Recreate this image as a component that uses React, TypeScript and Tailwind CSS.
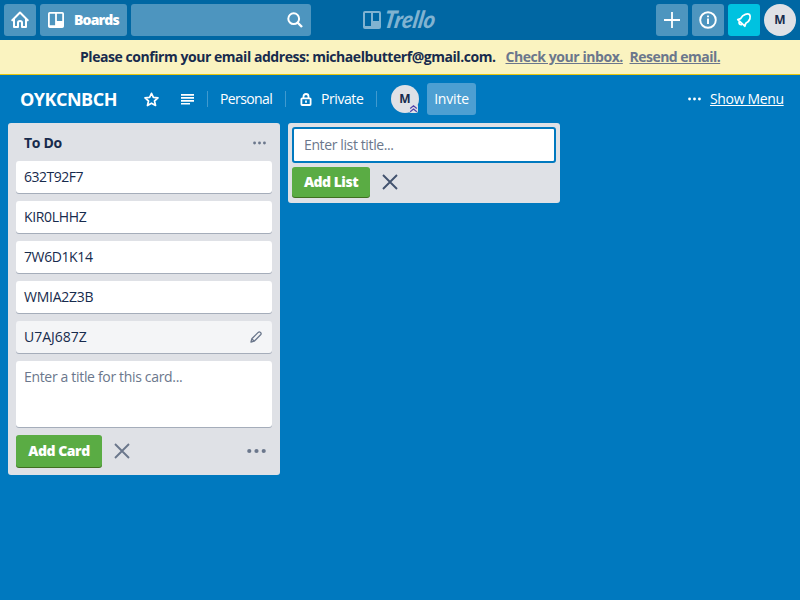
import type { ReactNode } from "react";

const cards = [
  { title: "632T92F7", tracking: "tracking-[-0.48px]" },
  { title: "KIR0LHHZ", tracking: "tracking-[-0.35px]" },
  { title: "7W6D1K14", tracking: "tracking-[-0.4px]" },
  { title: "WMIA2Z3B", tracking: "tracking-[-0.25px]" },
  { title: "U7AJ687Z", tracking: "tracking-[-0.02px]" },
];

function HeaderButton({ children, className = "" }: { children: ReactNode; className?: string }) {
  return (
    <button className={`flex h-8 shrink-0 items-center rounded-[3px] text-white ${className}`}>{children}</button>
  );
}

function BoardIcon({ className = "" }: { className?: string }) {
  return (
    <svg className={className} viewBox="0 0 18 18" fill="currentColor">
      <path
        fillRule="evenodd"
        d="M2 0H16Q18 0 18 2V16Q18 18 16 18H2Q0 18 0 16V2Q0 0 2 0ZM2 2V15H8V2ZM10 2V10H16V2Z"
      />
    </svg>
  );
}

function Dots({ size, className = "" }: { size: number; className?: string }) {
  return (
    <svg width={size} height={6} viewBox={`0 0 ${size} 6`} fill="currentColor" className={className}>
      <circle cx={size * 0.12} cy="3" r={size * 0.11} />
      <circle cx={size * 0.5} cy="3" r={size * 0.11} />
      <circle cx={size * 0.88} cy="3" r={size * 0.11} />
    </svg>
  );
}

function CloseIcon({ className = "" }: { className?: string }) {
  return (
    <svg width="16" height="16" viewBox="0 0 16 16" fill="none" stroke="currentColor" strokeWidth="1.9" className={className}>
      <path d="M1 1L15 15M15 1L1 15" />
    </svg>
  );
}

function TopBar() {
  return (
    <header className="flex h-10 items-center bg-[#0067a3] pr-1 pl-1">
      <HeaderButton className="w-8 justify-center bg-[#4d95bf]">
        <svg width="18" height="18" viewBox="0 0 18 18" fill="none" stroke="currentColor" strokeWidth="2" strokeLinejoin="round" strokeLinecap="round">
          <path d="M1.3 9.2L9 1.5L16.7 9.2M3 8V16H7V11.5Q7 10 9 10T11 11.5V16H15V8" />
        </svg>
      </HeaderButton>
      <HeaderButton className="ml-1 w-[87px] bg-[#4d95bf] pl-2">
        <BoardIcon className="size-4" />
        <span className="ml-[10px] text-[14px] leading-5 font-extrabold tracking-[-0.85px]">Boards</span>
      </HeaderButton>
      <div className="ml-1 flex h-8 w-[180px] items-center justify-end rounded-[3px] bg-[#4d95bf] pr-2 text-white">
        <svg width="16" height="16" viewBox="0 0 16 16" fill="none" stroke="currentColor" strokeWidth="2">
          <circle cx="6.7" cy="6.7" r="5.4" />
          <path d="M10.5 10.5L15 15" strokeWidth="2.4" />
        </svg>
      </div>
      <div className="ml-[52px] flex items-center text-[#80b3d1]">
        <BoardIcon className="h-[18px] w-[18px]" />
        <svg width="70" height="40" viewBox="0 0 70 40" className="ml-0.5 overflow-visible" fill="currentColor">
          <text
            transform="translate(0 28) skewX(-10)"
            textLength="51"
            lengthAdjust="spacingAndGlyphs"
            className="font-['Lato'] text-[24px] font-black italic"
          >
            Trello
          </text>
        </svg>
      </div>
      <div className="ml-auto flex gap-1">
        <HeaderButton className="w-8 justify-center bg-[#4d95bf]">
          <svg width="16" height="16" viewBox="0 0 16 16" stroke="currentColor" strokeWidth="1.8">
            <path d="M8 0V16M0 8H16" />
          </svg>
        </HeaderButton>
        <HeaderButton className="w-8 justify-center bg-[#4d95bf]">
          <svg width="18" height="18" viewBox="0 0 18 18" fill="none" stroke="currentColor" strokeWidth="1.9">
            <circle cx="9" cy="9" r="7.8" />
            <path d="M9 7.5V13M9 4.5V6.3" />
          </svg>
        </HeaderButton>
        <HeaderButton className="w-8 justify-center bg-[#00c2e0]">
          <svg width="16" height="16" viewBox="0 0 16 16" fill="none" stroke="currentColor" strokeWidth="1.8" strokeLinejoin="round">
            <path d="M1.8 7.6L4.6 6.6Q6.4 3.2 9.3 2.3Q12 1.5 13.5 2.5Q14.8 4.5 13.9 6.8Q12.8 9.8 9.8 11.3L8.8 14.2Z" />
            <path d="M3.3 9.6Q2.2 12.8 6 12.5" />
          </svg>
        </HeaderButton>
        <div className="flex size-8 items-center justify-center rounded-full bg-[#dfe1e6] text-[12px] font-bold text-[#172b4d]">M</div>
      </div>
    </header>
  );
}

function EmailBanner() {
  return (
    <div className="flex h-[35px] items-center border-b border-[#e6c60d] bg-[#faf3c0] pl-20 text-[14px] leading-5 font-bold whitespace-nowrap text-[#172b4d]">
      <span className="w-[425.5px] tracking-[-0.45px]">Please confirm your email address: michaelbutterf@gmail.com.</span>
      <a className="w-[124px] tracking-[-0.44px] text-[#6b778c] underline">Check your inbox.</a>
      <a className="tracking-[-0.52px] text-[#6b778c] underline">Resend email.</a>
    </div>
  );
}

function BoardBar() {
  return (
    <div className="flex h-12 items-center text-[14px] leading-5 whitespace-nowrap text-white">
      <h1 className="ml-5 w-[124px] text-[18px] leading-6 font-bold tracking-[-0.5px]">OYKCNBCH</h1>
      <svg width="15" height="15" viewBox="0 0 16 16" fill="none" stroke="currentColor" strokeWidth="1.8" strokeLinejoin="round">
        <path d="M8 1.4L10 5.8L14.9 6.3L11.2 9.6L12.3 14.4L8 11.9L3.7 14.4L4.8 9.6L1.1 6.3L6 5.8Z" />
      </svg>
      <svg width="13" height="12" viewBox="0 0 13 12" fill="currentColor" className="ml-[22px]">
        <path d="M0 1H13V2.7H0ZM0 4H13V5.7H0ZM0 7H13V8.7H0ZM0 10H9V11.6H0Z" />
      </svg>
      <i className="ml-[13px] h-4 w-px bg-[#409acf]" />
      <span className="ml-3 w-[65px] tracking-[-0.6px]">Personal</span>
      <i className="h-4 w-px bg-[#409acf]" />
      <svg width="12" height="13" viewBox="0 0 12 13" fill="none" stroke="currentColor" strokeWidth="1.8" className="ml-[14px]">
        <rect x="1.4" y="5.3" width="9.2" height="6.7" rx=".8" />
        <path d="M3.5 5V3.4Q3.5 1 6 1T8.5 3.4V5M6 7.5V9.7" />
      </svg>
      <span className="ml-[9px] w-[55px] tracking-[-0.42px]">Private</span>
      <i className="h-4 w-px bg-[#409acf]" />
      <div className="relative ml-[14px] flex size-7 items-center justify-center rounded-full bg-[#dfe1e6] text-[12px] font-bold text-[#172b4d]">
        M
        <svg width="9" height="9" viewBox="0 0 9 9" className="absolute right-px bottom-0" fill="none">
          <rect width="9" height="9" rx="2" fill="#dfe1e6" />
          <path d="M1.2 4.5L4.5 1.8L7.8 4.5M1.2 7.8L4.5 5.1L7.8 7.8" stroke="#5243aa" strokeWidth="1.2" />
        </svg>
      </div>
      <button className="ml-2 flex h-8 w-[49px] items-center justify-center rounded-[3px] bg-[#4d9fd2] tracking-[-0.2px]">Invite</button>
      <div className="mr-4 ml-auto flex items-center">
        <Dots size={13} />
        <a className="ml-[9px] w-[74px] tracking-[-0.35px] underline">Show Menu</a>
      </div>
    </div>
  );
}

function TodoList() {
  return (
    <section className="flex h-[352px] w-[272px] flex-col rounded-[3px] bg-[#dfe1e6] px-2">
      <div className="flex h-[38px] items-center justify-between pt-0.5 pr-[6px] pl-2">
        <h2 className="text-[14px] leading-5 font-bold tracking-[-0.3px]">To Do</h2>
        <Dots size={13} className="text-[#6b778c]" />
      </div>
      <div className="flex flex-col gap-2">
        {cards.map((card, index) => (
          <article
            key={card.title}
            className={`flex h-8 items-center justify-between rounded-[3px] pr-[10px] pl-2 text-[14px] leading-5 shadow-[0_1px_0_#a5adba] ${index === 4 ? "bg-[#f4f5f7]" : "bg-white"}`}
          >
            <span className={card.tracking}>{card.title}</span>
            {index === 4 && (
              <svg width="12" height="12" viewBox="0 0 12 12" fill="none" stroke="#6b778c" strokeWidth="1.3" strokeLinejoin="round">
                <path d="M1 11L1.8 7.8L8.2 1.4Q9.3 .4 10.5 1.5T10.6 3.8L4.2 10.2ZM1.8 7.8L4.2 10.2" />
              </svg>
            )}
          </article>
        ))}
        <div className="h-[66px] rounded-[3px] bg-white px-2 py-1.5 text-[14px] leading-5 tracking-[-0.33px] text-[#6b778c] shadow-[0_1px_0_#a5adba]">
          Enter a title for this card...
        </div>
      </div>
      <div className="mt-2 flex items-center">
        <button className="h-8 w-[86px] rounded-[3px] bg-[#5aac44] text-[14px] leading-5 font-extrabold tracking-[-0.45px] text-white shadow-[0_1px_0_#3f6f21]">Add Card</button>
        <CloseIcon className="ml-[11.5px] text-[#6b778c]" />
        <Dots size={19} className="mr-[6.5px] ml-auto text-[#6b778c]" />
      </div>
    </section>
  );
}

function NewList() {
  return (
    <section className="h-20 w-[272px] rounded-[3px] bg-[#dfe1e6] p-1">
      <div className="flex h-9 items-center rounded-[3px] border-2 border-[#0079bf] bg-white px-[10px] text-[14px] leading-5 tracking-[-0.38px] text-[#6b778c]">
        Enter list title...
      </div>
      <div className="mt-1 flex items-center">
        <button className="h-[30px] w-[78px] rounded-[3px] bg-[#5aac44] text-[14px] leading-5 font-extrabold tracking-[-0.5px] text-white shadow-[0_1px_0_#3f6f21]">Add List</button>
        <CloseIcon className="ml-3 text-[#42526e]" />
      </div>
    </section>
  );
}

export default function App() {
  return (
    <main className="h-[600px] w-[800px] overflow-hidden bg-[#0079bf] font-['Open_Sans','Noto_Sans',sans-serif] text-[#172b4d]">
      <TopBar />
      <EmailBanner />
      <BoardBar />
      <div className="flex items-start gap-2 px-2">
        <TodoList />
        <NewList />
      </div>
    </main>
  );
}
